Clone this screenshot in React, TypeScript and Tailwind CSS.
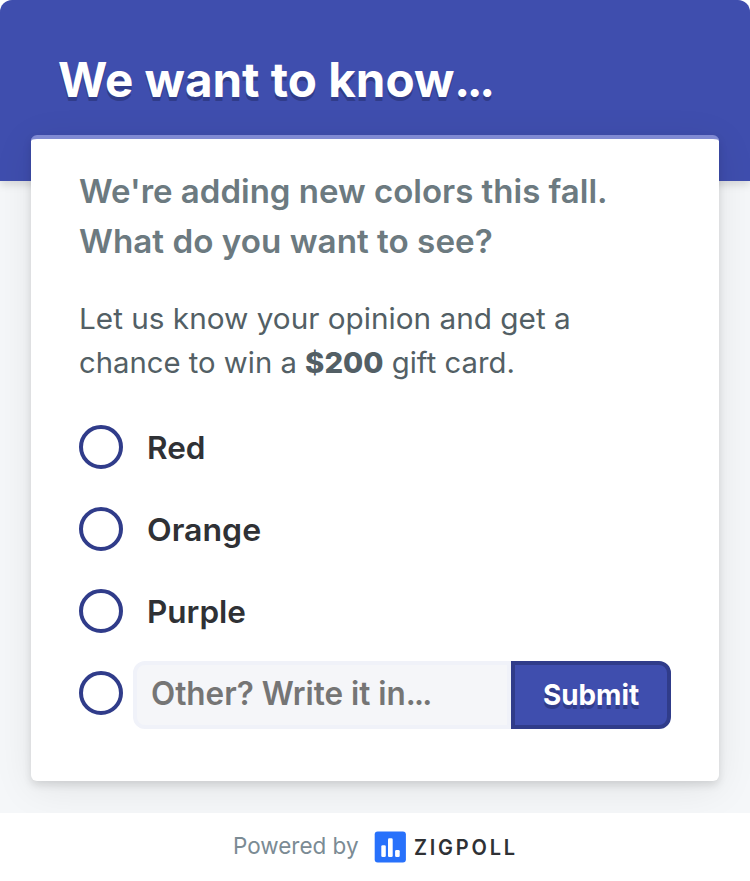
import React from "react";

// One line of text stretched to a fixed advance width.
function Line({ w, children, className = "" }: { w: number; children: React.ReactNode; className?: string }) {
  const ref = React.useRef<HTMLSpanElement>(null);
  const [s, setS] = React.useState(1);
  React.useLayoutEffect(() => {
    if (ref.current) setS(w / ref.current.offsetWidth);
  }, [w]);
  return (
    <span className="block whitespace-nowrap" style={{ width: w }}>
      <span ref={ref} className={`inline-block origin-left ${className}`} style={{ transform: `scaleX(${s})` }}>
        {children}
      </span>
    </span>
  );
}

function Radio() {
  return <span className="size-11 shrink-0 rounded-full border-4 border-[#303c8a] bg-white" />;
}

function Option({ label, w }: { label: string; w: number }) {
  return (
    <label className="flex h-11 items-center gap-6">
      <Radio />
      <span className="pt-0.5 text-[31.5px] leading-[44px] font-semibold text-[#2f3135]">
        <Line w={w}>{label}</Line>
      </span>
    </label>
  );
}

export default function App() {
  return (
    <div className="flex h-[881px] w-[750px] flex-col overflow-hidden bg-white font-['Inter',sans-serif]">
      <div className="h-[813px] shrink-0 overflow-hidden rounded-t-xl bg-[#f5f7f9]">
        <header className="h-[181px] bg-[#3f4eae] pt-[50px] pl-[58px] shadow-[0_4px_8px_rgba(0,0,0,0.12)]">
          <h1 className="text-[48px] leading-[60px] font-bold text-white [text-shadow:0_4px_0_#303c8a]">
            <Line w={434}>
              We want to know<span className="tracking-[-3.5px]">...</span>
            </Line>
          </h1>
        </header>
        <main className="relative mx-[31px] -mt-[46px] h-[646px] rounded-md border-t-4 border-[#808ad3] bg-white px-12 pt-[27px] shadow-[0_4px_8px_rgba(0,0,0,0.12),0_8px_40px_rgba(0,0,0,0.08)]">
          <h2 className="text-[33px] leading-[50px] font-semibold text-[#6c7a80]">
            <Line w={529}>We're adding new colors this fall.</Line>
            <Line w={414}>What do you want to see?</Line>
          </h2>
          <p className="mt-[31px] text-[29px] leading-[44px] text-[#535f65]">
            <Line w={492}>Let us know your opinion and get a</Line>
            <Line w={436}>
              chance to win a <b className="font-extrabold">$200</b> gift card.
            </Line>
          </p>
          <div className="mt-10 flex flex-col gap-[38px]">
            <Option label="Red" w={58} />
            <Option label="Orange" w={114} />
            <Option label="Purple" w={99} />
          </div>
          <div className="mt-[28px] flex h-[68px] items-center">
            <span className="mr-2.5 -mt-1 flex">
              <Radio />
            </span>
            <div className="flex h-[68px] w-[378px] items-center rounded-l-xl border-4 border-[#f0f2f9] bg-[#f5f6f9] pb-0.5 pl-3.5 text-[32px] leading-[44px] font-semibold text-[#757575]">
              <Line w={279}>
                Other? Write it in<span className="tracking-[-1.8px]">...</span>
              </Line>
            </div>
            <button className="flex h-[68px] w-40 items-center justify-center rounded-r-xl border-4 border-[#303c8a] bg-[#3f4eae] text-[29px] leading-[36px] font-bold text-white [text-shadow:0_4px_0_#303c8a]">
              <Line w={96}>Submit</Line>
            </button>
          </div>
        </main>
      </div>
      <footer className="flex h-[68px] items-center pl-[233px]">
        <span className="mr-[15px] mb-0.5 text-[23px] leading-7 text-[#7b8b94]">
          <Line w={126}>Powered by</Line>
        </span>
        <svg width="32" height="32" viewBox="0 0 32 32" className="mr-2">
          <rect x="0.7" y="0.5" width="31.2" height="31" rx="3" fill="#2871fb" />
          <rect x="7.3" y="14.2" width="4.5" height="11.8" rx="1.3" fill="#fff" />
          <rect x="14" y="7.3" width="4.7" height="18.7" rx="1.3" fill="#fff" />
          <rect x="21.1" y="19" width="4.6" height="7" rx="1.3" fill="#fff" />
        </svg>
        <span className="text-[21.5px] leading-7 font-semibold text-[#2f3135]">
          <Line w={104} className="tracking-[3px]">ZIGPOLL</Line>
        </span>
      </footer>
    </div>
  );
}
